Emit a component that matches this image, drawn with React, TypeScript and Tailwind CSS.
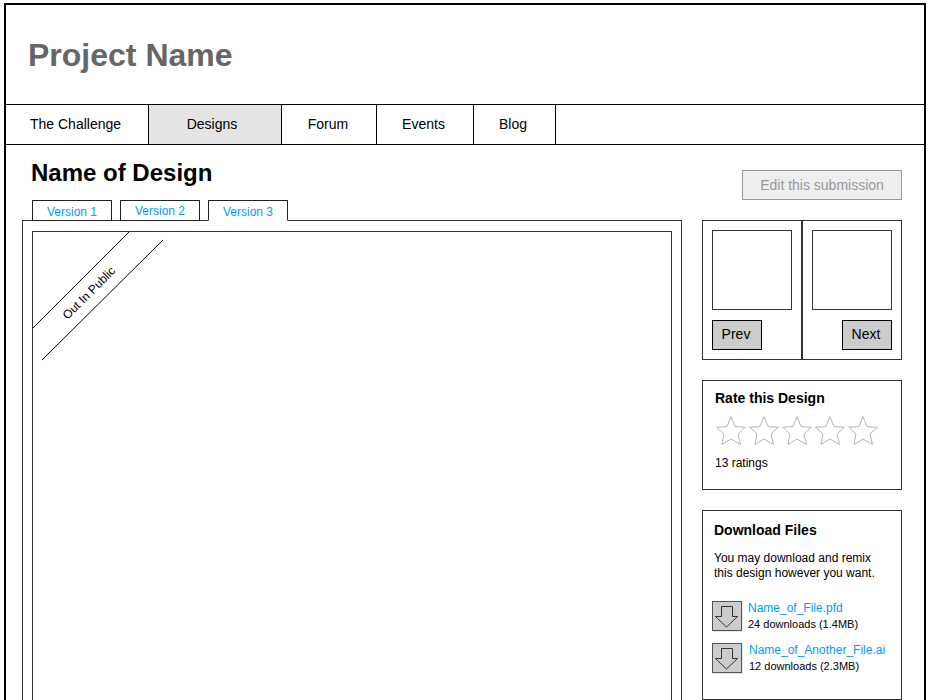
// Wireframe de la página de una entrega: cabecera, pestañas de versión y columna lateral.
import type { ReactNode } from "react";

const FONT = "font-['Liberation_Sans',Arial,sans-serif]";

const navItems = [
  { label: "The Challenge", width: "w-[143px]", active: false, align: "pl-[24px]" },
  { label: "Designs", width: "w-[133px]", active: true, align: "justify-center pr-[6px]" },
  { label: "Forum", width: "w-[95px]", active: false, align: "justify-center pr-[2px]" },
  { label: "Events", width: "w-[97px]", active: false, align: "justify-center pr-[3px]" },
  { label: "Blog", width: "w-[82px]", active: false, align: "justify-center pr-[3px]" },
];

function Star() {
  return (
    <svg width="33" height="30" viewBox="0 0 33 30" fill="none" stroke="#b4b4b4" strokeWidth="1">
      <path d="M16 0.7 L20 10.5 L30.3 11.3 L23 18 L25.5 28.5 L16 23 L7 28.5 L9 18 L1.7 11.3 L12 10.5 Z" />
    </svg>
  );
}

function DownloadIcon() {
  return (
    <div className="h-[30px] w-[30px] shrink-0 border border-[#555] bg-[#cccccc] shadow-[1px_1px_0_#e8e8e8]">
      <svg width="28" height="28" viewBox="0 0 28 28" fill="none" stroke="#333333" strokeWidth="1">
        <path d="M8.5 4.5 H19.5 V14.5 H24.5 L13.5 25 L2.5 14.5 H8.5 Z" />
      </svg>
    </div>
  );
}

function FileRow({ name, meta, className, textClass }: { name: string; meta: string; className?: string; textClass?: string }) {
  return (
    <div className={`flex items-center ${className ?? ""}`}>
      <DownloadIcon />
      <div className={`ml-[6px] ${textClass ?? ""}`}>
        <div className="text-[12px] leading-[16px] text-[#0099ff]">{name}</div>
        <div className="text-[11px] leading-[16px] text-black">{meta}</div>
      </div>
    </div>
  );
}

function Tab({ children, active, className }: { children: ReactNode; active?: boolean; className?: string }) {
  return (
    <div
      className={`relative flex h-[21px] w-[80px] items-center justify-center border border-[#222] bg-white text-[12px] text-[#0099ff] ${
        active ? "z-10 border-b-white" : ""
      } ${className ?? ""}`}
    >
      {children}
    </div>
  );
}

export default function App() {
  return (
    <div className={`h-[700px] w-[930px] overflow-hidden bg-white ${FONT}`}>
      <div className="ml-[4px] mt-[3px] h-[720px] w-[922px] border-2 border-black">
        <header className="flex h-[99px] items-center pl-[22px]">
          <h1 className="pt-[1px] text-[32px] font-bold text-[#666666]">Project Name</h1>
        </header>

        <nav className="flex h-[41px] border-y border-black">
          {navItems.map((item) => (
            <div
              key={item.label}
              className={`flex items-center border-r border-black text-[14px] text-black ${item.width} ${item.align} ${
                item.active ? "bg-[#e4e4e4]" : ""
              }`}
            >
              {item.label}
            </div>
          ))}
        </nav>

        <div className="flex justify-between pl-[25px] pr-[22px] pt-[12px]">
          <h2 className="text-[24px] font-bold leading-[32px] text-black">Name of Design</h2>
          <button
            type="button"
            className="mt-[13px] h-[30px] w-[160px] border border-[#999] bg-[#eeeeee] text-[14px] text-[#999999]"
          >
            Edit this submission
          </button>
        </div>

        <div className="flex gap-[20px] pl-[16px]">
          <div>
            <div className="relative z-10 flex gap-[8px] pl-[10px]">
              <Tab className="pt-[2px]">Version 1</Tab>
              <Tab>Version 2</Tab>
              <Tab active className="pt-[2px]">Version 3</Tab>
            </div>
            <div className="-mt-px h-[600px] w-[660px] border border-[#333] pl-[9px] pt-[10px]">
              <div className="relative h-[560px] w-[640px] border border-[#333]">
                <svg className="absolute left-0 top-0" width="140" height="135" fill="none" stroke="#000000" strokeWidth="1">
                  <line x1="0" y1="96" x2="96" y2="0" />
                  <line x1="9" y1="128" x2="130" y2="8" />
                </svg>
                <span className="absolute left-[16px] top-[54px] w-[80px] -rotate-45 text-center text-[12px] leading-[14px] text-black">
                  Out In Public
                </span>
              </div>
            </div>
          </div>

          <aside className="mt-[20px] flex w-[200px] flex-col gap-[20px]">
            <div className="flex h-[140px] border border-[#333]">
              <div className="flex w-[100px] flex-col border-r-2 border-[#333] pl-[9px] pt-[9px]">
                <div className="h-[80px] w-[80px] border border-[#333]" />
                <button type="button" className="mt-[10px] h-[30px] w-[50px] border border-black bg-[#cccccc] pb-[2px] pr-[2px] text-[14px] text-black">
                  Prev
                </button>
              </div>
              <div className="flex flex-1 flex-col pl-[9px] pt-[9px]">
                <div className="h-[80px] w-[80px] border border-[#333]" />
                <button type="button" className="ml-[30px] mt-[10px] h-[30px] w-[50px] border border-black bg-[#cccccc] pb-[2px] pr-[2px] text-[14px] text-black">
                  Next
                </button>
              </div>
            </div>

            <div className="h-[110px] border border-[#333] pl-[12px] pt-[9px]">
              <h3 className="text-[14px] font-bold leading-[16px] text-black">Rate this Design</h3>
              <div className="mt-[10px] flex">
                {[0, 1, 2, 3, 4].map((i) => (
                  <Star key={i} />
                ))}
              </div>
              <div className="mt-[10px] text-[12px] leading-[14px] text-black">13 ratings</div>
            </div>

            <div className="h-[190px] border border-[#333] pl-[9px] pt-[11px]">
              <h3 className="pl-[2px] text-[14px] font-bold leading-[16px] text-black">Download Files</h3>
              <p className="mt-[13px] pl-[2px] text-[12px] leading-[15px] text-black">
                You may download and remix
                <br />
                this design however you want.
              </p>
              <FileRow className="mt-[19px]" name="Name_of_File.pfd" meta="24 downloads (1.4MB)" />
              <FileRow className="mt-[10px]" textClass="pl-[1px]" name="Name_of_Another_File.ai" meta="12 downloads (2.3MB)" />
            </div>
          </aside>
        </div>
      </div>
    </div>
  );
}
